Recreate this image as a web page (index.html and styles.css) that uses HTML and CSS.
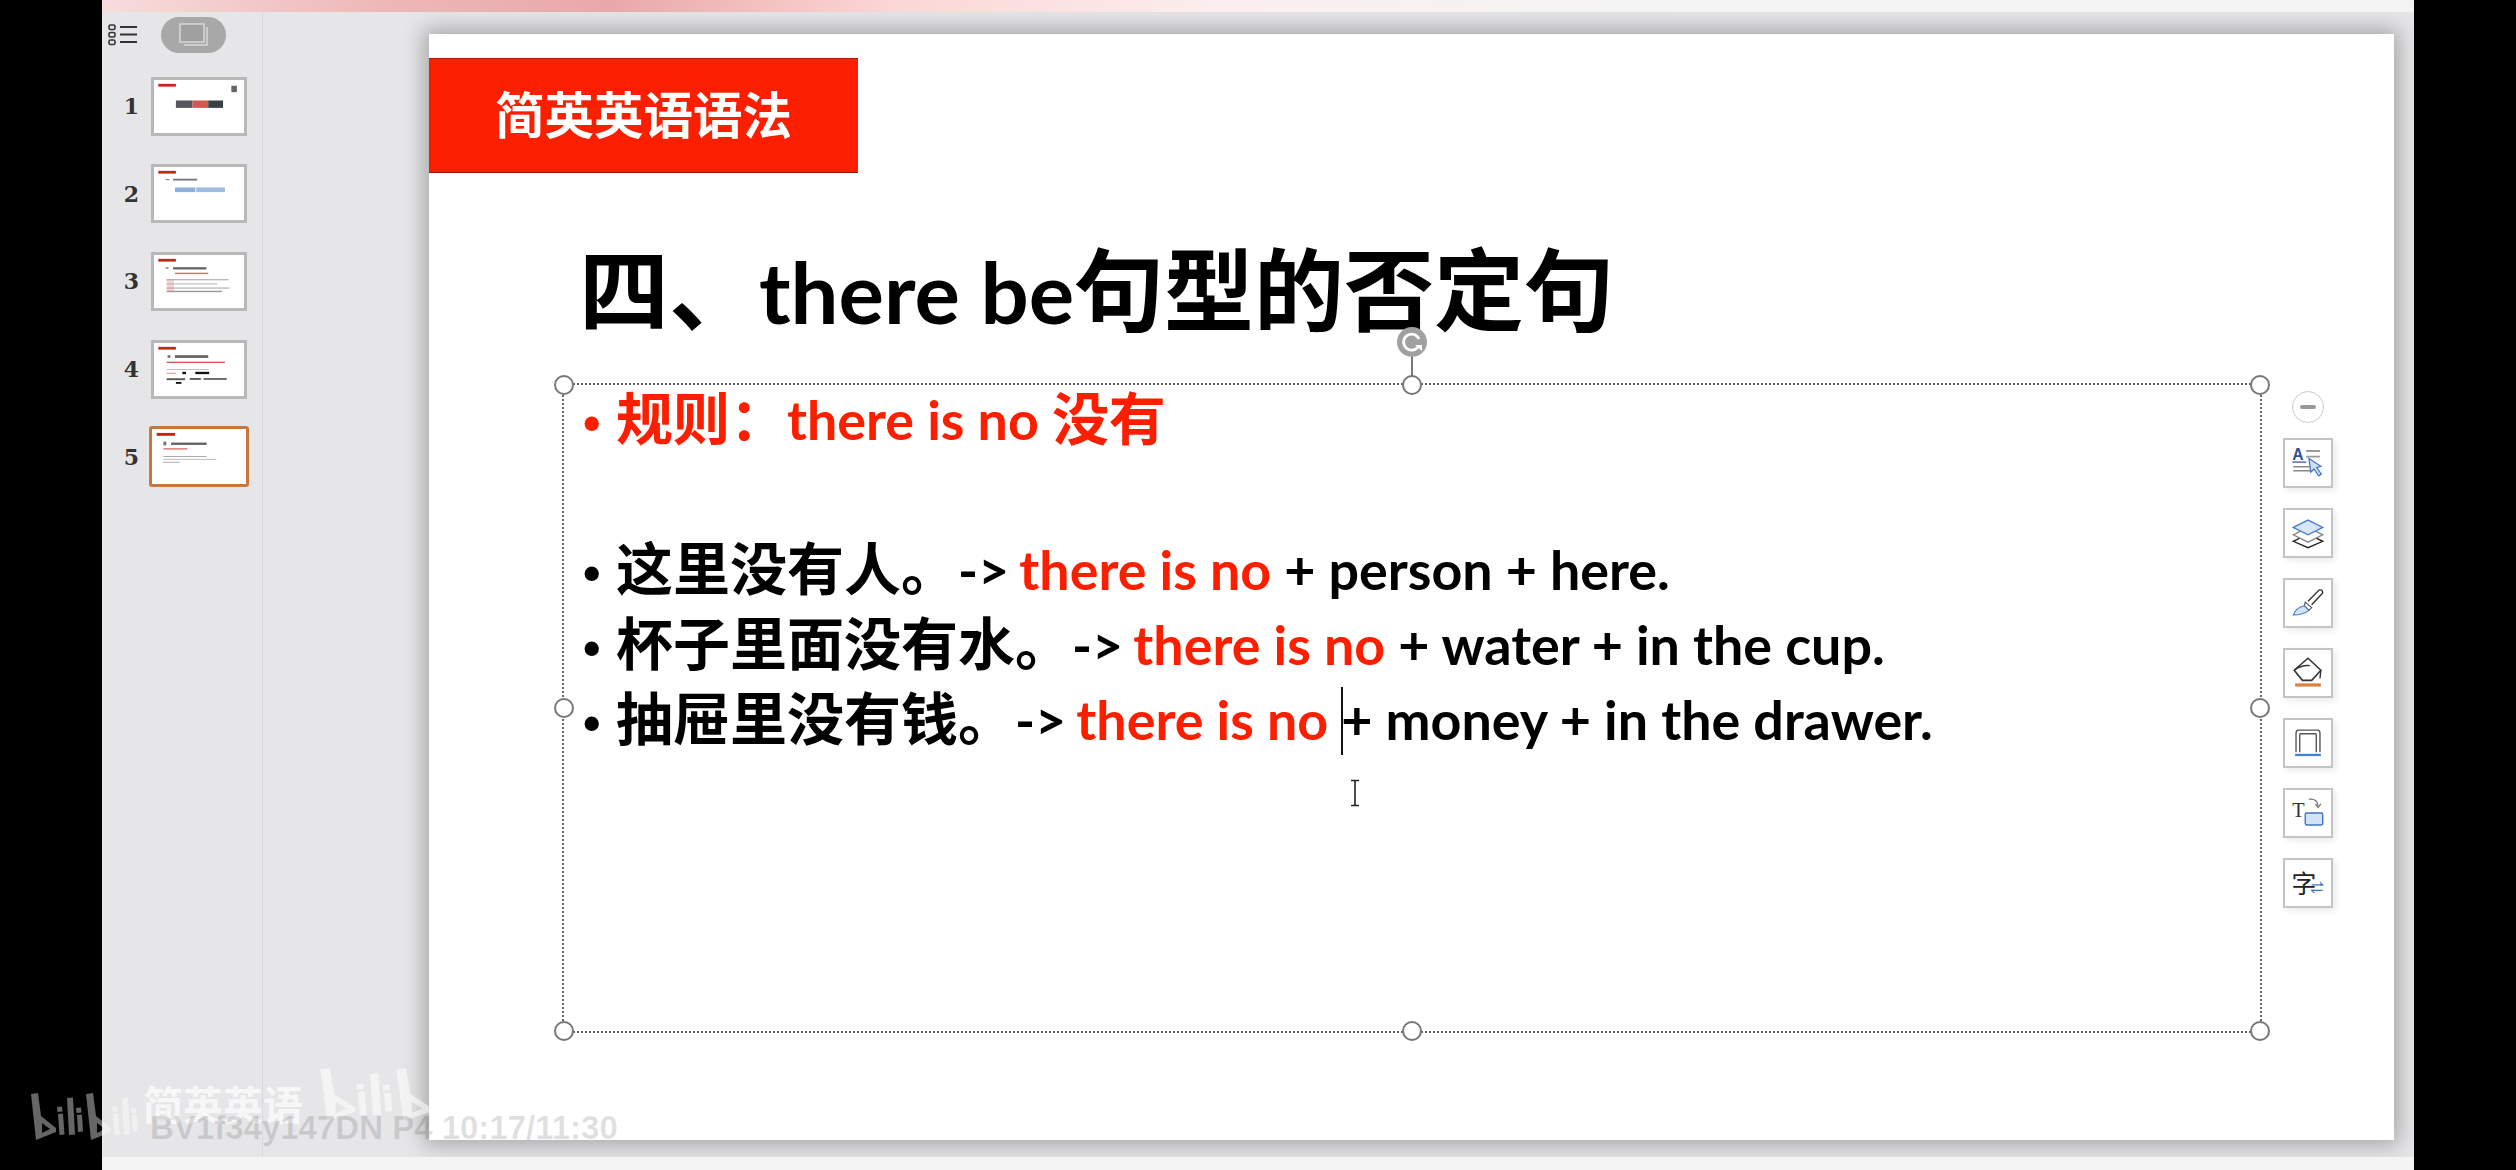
FILE: index.html
```html
<!DOCTYPE html>
<html lang="zh-CN">
<head>
  <meta charset="UTF-8" />
  <title>简英英语语法</title>
  <link rel="stylesheet" href="styles.css">
</head>
<body>
  <div class="app">
    <div class="top-strip"></div>

    <div class="work">
      <aside class="thumbs">
        <div class="thumbs-head">
          <svg class="outline-icon" width="30" height="22" viewBox="0 0 30 22">
            <rect x="1" y="1" width="6" height="4.5" rx="1.5" fill="none" stroke="#333" stroke-width="1.6"/>
            <rect x="1" y="8.5" width="6" height="4.5" rx="1.5" fill="none" stroke="#333" stroke-width="1.6"/>
            <rect x="1" y="16" width="6" height="4.5" rx="1.5" fill="none" stroke="#333" stroke-width="1.6"/>
            <path d="M12 3h17M12 10.500h17M12 18h17" stroke="#333" stroke-width="1.8"/>
          </svg>
          <div class="view-pill">
            <svg width="32" height="26" viewBox="0 0 32 26">
              <rect x="2" y="2" width="24" height="18" fill="#a0a0a0" stroke="#d8d8d8" stroke-width="1.5"/>
              <path d="M29 5v18H6" fill="none" stroke="#d8d8d8" stroke-width="1.5"/>
            </svg>
          </div>
        </div>

        <div class="thumb-row">
          <span class="thumb-num">1</span>
          <div class="thumb">
            <svg viewBox="0 0 90 53">
              <rect x="1" y="2" width="19" height="3" fill="#c8241c"/>
              <rect x="80" y="4" width="6" height="7" fill="#666"/>
              <rect x="20" y="20" width="18" height="8" fill="#55565c"/>
              <rect x="38" y="20" width="17" height="8" fill="#d05a50"/>
              <rect x="55" y="20" width="16" height="8" fill="#3a4048"/>
            </svg>
          </div>
        </div>
        <div class="thumb-row">
          <span class="thumb-num">2</span>
          <div class="thumb">
            <svg viewBox="0 0 90 53">
              <rect x="1" y="2" width="19" height="3" fill="#c8241c"/>
              <rect x="9" y="11" width="4" height="1" fill="#666"/>
              <rect x="17" y="10.500" width="26" height="2" fill="#777"/>
              <rect x="19" y="20" width="22" height="5" fill="#8fb0dc"/>
              <rect x="42" y="20" width="31" height="5" fill="#9dbce2"/>
            </svg>
          </div>
        </div>
        <div class="thumb-row">
          <span class="thumb-num">3</span>
          <div class="thumb">
            <svg viewBox="0 0 90 53">
              <rect x="1" y="2" width="19" height="3" fill="#c8241c"/>
              <rect x="9" y="11" width="3" height="2" fill="#999"/>
              <rect x="17" y="11" width="36" height="2.500" fill="#666"/>
              <rect x="19" y="17" width="36" height="1.500" fill="#d86a62"/>
              <rect x="10" y="24" width="67" height="1.200" fill="#aaa"/>
              <rect x="10" y="28.500" width="55" height="1.200" fill="#bbb"/>
              <rect x="10" y="33" width="68" height="1.200" fill="#aaa"/>
              <rect x="10" y="36.500" width="60" height="1.500" fill="#999"/>
              <rect x="10" y="24" width="8" height="14" fill="#d88" opacity=".35"/>
            </svg>
          </div>
        </div>
        <div class="thumb-row">
          <span class="thumb-num">4</span>
          <div class="thumb">
            <svg viewBox="0 0 90 53">
              <rect x="1" y="2" width="19" height="3" fill="#c8241c"/>
              <rect x="11" y="11" width="3" height="3" fill="#777"/>
              <rect x="19" y="11" width="36" height="3" fill="#666"/>
              <rect x="10" y="18" width="63" height="1.500" fill="#d8564e"/>
              <rect x="10" y="26" width="45" height="1" fill="#bbb"/>
              <rect x="10" y="30" width="10" height="1.500" fill="#e8a8a0"/>
              <rect x="27" y="29" width="4" height="2.500" fill="#111"/>
              <rect x="41" y="29" width="15" height="2.500" fill="#111"/>
              <rect x="10" y="36" width="20" height="2" fill="#555"/>
              <rect x="35" y="36" width="12" height="1.500" fill="#222"/>
              <rect x="50" y="36" width="25" height="1.500" fill="#333"/>
              <rect x="20" y="40" width="6" height="2" fill="#111"/>
            </svg>
          </div>
        </div>
        <div class="thumb-row">
          <span class="thumb-num">5</span>
          <div class="thumb thumb-active">
            <svg viewBox="0 0 90 53">
              <rect x="1" y="2" width="19" height="3" fill="#c8241c"/>
              <rect x="8" y="11" width="3" height="4" fill="#777"/>
              <rect x="16" y="12" width="37" height="2.500" fill="#666"/>
              <rect x="8" y="18" width="25" height="1.200" fill="#d8564e"/>
              <rect x="8" y="26" width="45" height="1" fill="#aaa"/>
              <rect x="8" y="29" width="55" height="1" fill="#bbb"/>
              <rect x="8" y="32" width="17" height="1" fill="#aaa"/>
            </svg>
          </div>
        </div>
      </aside>

      <main class="stage">
        <section class="slide">
          <div class="slide-tag">简英英语语法</div>
          <h1 class="slide-title">四、<span class="latin">there be</span>句型的否定句</h1>

          <div class="text-box">
            <ul class="rules">
              <li class="red"><span class="dot">•</span><span>规则：<span class="en">there is no </span>没有</span></li>
              <li class="blank">&nbsp;</li>
              <li><span class="dot">•</span><span>这里没有人。<span class="en">-&gt; <span class="red">there is no</span> + person + here.</span></span></li>
              <li><span class="dot">•</span><span>杯子里面没有水。<span class="en">-&gt; <span class="red">there is no</span> + water + in the cup.</span></span></li>
              <li><span class="dot">•</span><span>抽屉里没有钱。<span class="en">-&gt; <span class="red">there is no</span> <span class="caret"></span>+ money + in the drawer.</span></span></li>
            </ul>

            <svg class="ibeam" width="12" height="28" viewBox="0 0 12 28">
              <path d="M2 1.500h8M6 1.500v25M2 26.500h8" fill="none" stroke="#222" stroke-width="1.600"/>
            </svg>

            <div class="rotate-line"></div>
            <div class="rotate-handle">
              <svg width="30" height="30" viewBox="0 0 30 30">
                <path d="M21 20a8 8 0 1 1 1-8" fill="none" stroke="#fff" stroke-width="2.800"/>
                <path d="M18 18h7v6z" fill="#fff"/>
              </svg>
            </div>
            <span class="handle h-tl"></span>
            <span class="handle h-tc"></span>
            <span class="handle h-tr"></span>
            <span class="handle h-ml"></span>
            <span class="handle h-mr"></span>
            <span class="handle h-bl"></span>
            <span class="handle h-bc"></span>
            <span class="handle h-br"></span>
          </div>

          <div class="float-tools">
            <div class="collapse-btn"><span></span></div>

            <div class="tool">
              <svg viewBox="0 0 50 50">
                <text x="8" y="22" class="ico-a">A</text>
                <path d="M8 24h15" stroke="#3c63ad" stroke-width="1.500"/>
                <path d="M23 12h15M23 18h15" stroke="#999" stroke-width="2"/>
                <path d="M9 29h21M9 33.500h21" stroke="#888" stroke-width="1.600"/>
                <path d="M26 20l2 15 3.500-3.500 5 7.500 3-2-5-7 4.500-1.500z" fill="#cfe0f6" stroke="#3f74c4" stroke-width="1.300"/>
              </svg>
            </div>
            <div class="tool">
              <svg viewBox="0 0 50 50">
                <path d="M9 34l16-8 16 8-16 7z" fill="none" stroke="#222" stroke-width="1.500"/>
                <path d="M9 27l16-8 16 8-16 8z" fill="#fff" stroke="#888" stroke-width="1.500"/>
                <path d="M9 19l16-8 16 8-16 8z" fill="#d9e6f8" stroke="#4a7fd0" stroke-width="1.500"/>
              </svg>
            </div>
            <div class="tool">
              <svg viewBox="0 0 50 50">
                <path d="M25 23L37 11q4-1 4 3L29 27" fill="none" stroke="#333" stroke-width="1.500"/>
                <path d="M22 24l7 6-3 3-5-5z" fill="#fff" stroke="#555" stroke-width="1.200"/>
                <path d="M21 28l5 5q-6 5-17 5 3-8 12-10z" fill="#d4e3f7" stroke="#4a7fd0" stroke-width="1.300"/>
              </svg>
            </div>
            <div class="tool">
              <svg viewBox="0 0 50 50">
                <path d="M25 9l14 13-10 11H19L10 22z" fill="none" stroke="#333" stroke-width="1.700"/>
                <path d="M10 22q8-6 17-5M39 22l-1 9" fill="none" stroke="#333" stroke-width="1.500"/>
                <path d="M11 38h28" stroke="#d9823f" stroke-width="3.500"/>
              </svg>
            </div>
            <div class="tool">
              <svg viewBox="0 0 50 50">
                <path d="M12 35V14q0-3 3-3h20q3 0 3 3v21" fill="none" stroke="#555" stroke-width="1.500"/>
                <path d="M16 35V16q0-1 1-1h16q1 0 1 1v19" fill="none" stroke="#555" stroke-width="1.500"/>
                <path d="M11 38h28" stroke="#3f83d8" stroke-width="2.500"/>
              </svg>
            </div>
            <div class="tool">
              <svg viewBox="0 0 50 50">
                <text x="8" y="29" class="ico-t">T</text>
                <path d="M26 10q9-1 10 7" fill="none" stroke="#777" stroke-width="1.400"/>
                <path d="M33 15l3 4 3-4" fill="none" stroke="#777" stroke-width="1.400"/>
                <rect x="22" y="25" width="19" height="13" rx="1.500" fill="#d4e3f7" stroke="#3f74c4" stroke-width="1.500"/>
              </svg>
            </div>
            <div class="tool">
              <svg viewBox="0 0 50 50">
                <text x="7" y="36" class="ico-zi">字</text>
                <path d="M29 27h12M29 33h12" stroke="#3f74c4" stroke-width="1.400"/>
                <path d="M38 24l3 3-3 0M32 36l-3-3 3 0" fill="none" stroke="#3f74c4" stroke-width="1.200"/>
              </svg>
            </div>
          </div>
        </section>
      </main>
    </div>

    <div class="bottom-strip"></div>
  </div>

  <!-- video watermark, lies over everything -->
  <svg class="wm-logo" width="110" height="52" viewBox="0 0 110 52">
    <g id="bili">
      <path fill-rule="evenodd" d="M1 4l7-1 3 23 15 12v4L6 50zM12 33v10l8-4z"/>
      <path d="M27 17l5-.5.500 5-5 .5zM28 24l5-.5 1.500 21-5 .5zM37 8l6-.5 2 37-6 .5zM46 18l5-.5.500 5-5 .5zM47 25l5-.5 1 17-5 .5z"/>
    </g>
    <use href="#bili" x="55"/>
  </svg>
  <svg class="wm-logo-big" width="152" height="58" viewBox="0 0 110 52" preserveAspectRatio="none">
    <use href="#bili"/>
    <use href="#bili" x="55"/>
  </svg>
  <div class="wm-name">简英英语</div>
  <div class="wm-id">BV1f34y147DN P4 10:17/11:30</div>
</body>
</html>
```

FILE: styles.css
```css
html, body {
  margin: 0;
  height: 100%;
}
body {
  width: 2516px;
  height: 1170px;
  overflow: hidden;
  position: relative;
  background-color: #000;
  font-family: Lato, "Noto Sans CJK SC", sans-serif;
  color: #000;
}
.app {
  width: 2312px;
  height: 1170px;
  margin-left: 102px;
  display: flex;
  flex-direction: column;
  overflow: hidden;
  background-color: #e6e6e8;
}
.top-strip {
  height: 12px;
  flex: none;
  position: relative;
  z-index: 2;
  background: linear-gradient(90deg, #f8dcdc 0%, #eeb8b8 12%, #e9a8a8 22%, #fbd6d4 34%, #fbeeee 48%, #f5f3f3 62%, #f3f3f3 100%);
}
.bottom-strip {
  height: 13px;
  flex: none;
  position: relative;
  z-index: 2;
  background-color: #f4f4f4;
}
.work {
  flex: 1;
  display: flex;
  min-height: 0;
}

/* left thumbnails */
.thumbs {
  width: 160px;
  flex: none;
  border-right: 1px solid #d8d8da;
  box-sizing: content-box;
}
.thumbs-head {
  display: flex;
  align-items: center;
  height: 36px;
  margin-top: 5px;
  padding-left: 6px;
}
.outline-icon {
  flex: none;
}
.view-pill {
  width: 65px;
  height: 36px;
  margin-left: 23px;
  border-radius: 18px;
  background-color: #a8a8a8;
  display: flex;
  align-items: center;
  justify-content: center;
}
.thumb-row {
  display: flex;
  align-items: center;
  height: 60px;
  margin-bottom: 27.7px;
}
.thumbs-head + .thumb-row {
  margin-top: 23px;
}
.thumb-num {
  width: 37px;
  margin-right: 12px;
  text-align: right;
  font-family: "DejaVu Serif", serif;
  font-weight: bold;
  font-size: 22px;
  color: #333;
}
.thumb {
  width: 96px;
  height: 59px;
  box-sizing: border-box;
  border: 3px solid #b8b8b8;
  padding: 2px;
  background-color: #fff;
}
.thumb svg {
  display: block;
  width: 100%;
  height: 100%;
  filter: blur(0.6px);
}
.thumb-active {
  width: 100px;
  height: 61px;
  margin-left: -2px;
  border: 3px solid #c8763c;
  border-radius: 3px;
}

/* stage and slide */
.stage {
  flex: 1;
  min-width: 0;
  padding: 22px 20px 0 166px;
}
.slide {
  width: 1965px;
  height: 1106px;
  padding-top: 24px;
  box-sizing: border-box;
  position: relative;
  background-color: #fff;
  box-shadow: 0 0 20px 5px rgba(0, 0, 0, 0.28);
}
.slide-tag {
  width: 429px;
  height: 115px;
  box-sizing: border-box;
  border-top: 1px solid #b01800;
  border-bottom: 1px solid #a01500;
  background-color: #fb1f00;
  color: #fff;
  font-size: 49.500px;
  font-weight: bold;
  line-height: 113px;
  text-align: center;
}
.slide-title {
  margin: 0 0 0 150px;
  height: 212px;
  box-sizing: border-box;
  padding-top: 56px;
  font-size: 90px;
  line-height: 120px;
  font-weight: bold;
  white-space: nowrap;
}
.slide-title .latin {
  font-size: 85px;
  font-weight: bold;
}
.text-box {
  display: flow-root;
  width: 1696px;
  height: 646px;
  margin-left: 135px;
  box-sizing: border-box;
  padding: 0 0 0 19px;
  position: relative;
  outline: 2px dotted #666;
}
.rules {
  list-style: none;
  margin: -4px 0 0;
  padding: 0;
  font-size: 57px;
  line-height: 75px;
  font-weight: bold;
  white-space: nowrap;
}
.rules li {
  display: flex;
  align-items: baseline;
  height: 75px;
}
.en {
  font-size: 53.800px;
}
.en .red {
  margin-left: -3px;
}
.dot {
  width: 33px;
  flex: none;
  font-family: "Liberation Sans", sans-serif;
  font-size: 50px;
}
.red {
  color: #fb1f00;
}
.caret {
  display: inline-block;
  width: 2px;
  height: 68px;
  margin-right: -2px;
  background-color: #111;
  vertical-align: -15px;
}
.ibeam {
  position: absolute;
  left: 785px;
  top: 394px;
}

/* selection handles */
.handle {
  position: absolute;
  width: 20px;
  height: 20px;
  box-sizing: border-box;
  border: 2px solid #777;
  border-radius: 50%;
  background-color: #fff;
  transform: translate(-50%, -50%);
}
.h-tl { left: 0; top: 0; }
.h-tc { left: 50%; top: 0; }
.h-tr { left: 100%; top: 0; }
.h-ml { left: 0; top: 50%; }
.h-mr { left: 100%; top: 50%; }
.h-bl { left: 0; top: 100%; }
.h-bc { left: 50%; top: 100%; }
.h-br { left: 100%; top: 100%; }
.rotate-line {
  position: absolute;
  left: 50%;
  top: -30px;
  width: 2px;
  height: 30px;
  margin-left: -1px;
  background-color: #777;
}
.rotate-handle {
  position: absolute;
  left: 50%;
  top: -58px;
  width: 30px;
  height: 30px;
  margin-left: -15px;
  border-radius: 50%;
  background-color: #a0a0a0;
}
.rotate-handle svg {
  display: block;
}

/* floating tools at the right of the slide */
.float-tools {
  position: absolute;
  left: 1854px;
  top: 357px;
  display: flex;
  flex-direction: column;
  align-items: center;
  gap: 20px;
}
.collapse-btn {
  width: 32px;
  height: 32px;
  box-sizing: border-box;
  margin-bottom: -5px;
  border: 1.500px solid #ccc;
  border-radius: 50%;
  display: flex;
  align-items: center;
  justify-content: center;
  background-color: #fff;
}
.collapse-btn span {
  width: 16px;
  height: 4px;
  background-color: #999;
  border-radius: 2px;
}
.tool {
  width: 50px;
  height: 50px;
  box-sizing: border-box;
  border: 2px solid #c4c4c4;
  background-color: #fff;
  box-shadow: 3px 3px 6px rgba(0, 0, 0, 0.08);
}
.tool svg {
  display: block;
  width: 46px;
  height: 46px;
}
.ico-a {
  font-family: "Liberation Sans", sans-serif;
  font-weight: bold;
  font-size: 17px;
  fill: #2f4f96;
}
.ico-t {
  font-family: "Liberation Serif", serif;
  font-size: 22px;
  fill: #333;
}
.ico-zi {
  font-family: "Noto Sans CJK SC", sans-serif;
  font-size: 27px;
  fill: #222;
}

/* watermark */
.wm-logo {
  position: absolute;
  left: 30px;
  top: 1090px;
  fill: rgba(255, 255, 255, 0.4);
}
.wm-logo-big {
  position: absolute;
  left: 319px;
  top: 1065px;
  fill: rgba(255, 255, 255, 0.55);
}
.wm-name {
  position: absolute;
  left: 143px;
  top: 1084px;
  font-family: "Noto Sans CJK SC", sans-serif;
  font-weight: bold;
  font-size: 40px;
  line-height: 38px;
  color: rgba(255, 255, 255, 0.7);
}
.wm-id {
  position: absolute;
  left: 150px;
  top: 1114px;
  font-family: "Liberation Sans", sans-serif;
  font-weight: bold;
  font-size: 33px;
  line-height: 28px;
  white-space: nowrap;
  color: rgba(0, 0, 0, 0.12);
}
```
